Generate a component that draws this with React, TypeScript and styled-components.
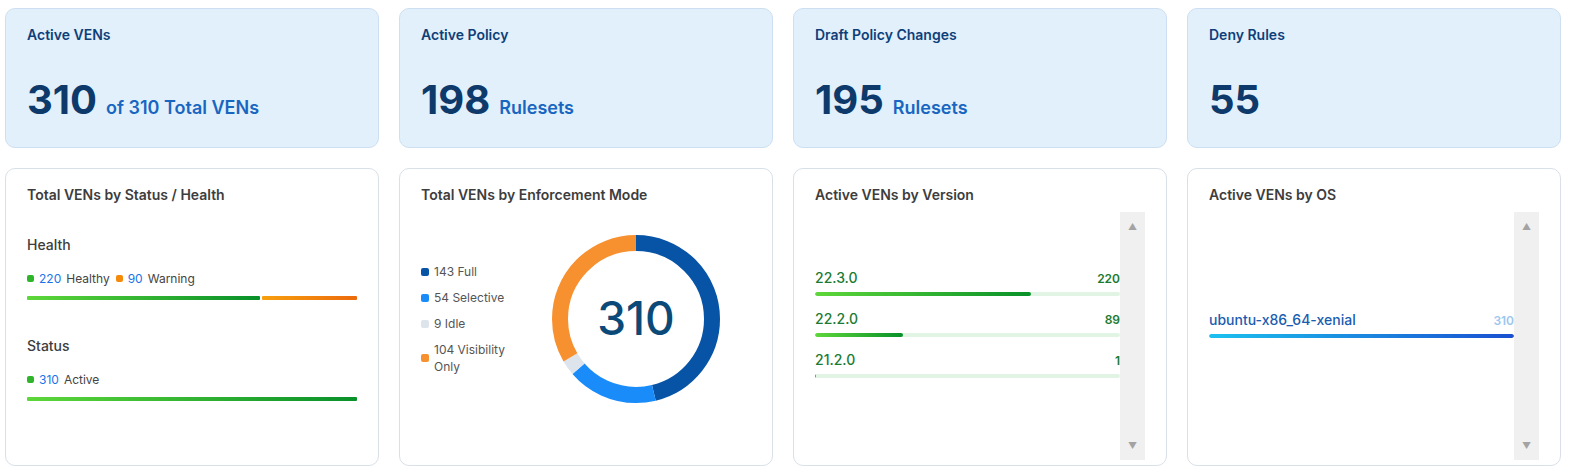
import styled, { createGlobalStyle } from 'styled-components'

const Global = createGlobalStyle`
  body { margin: 0; font-family: Inter, "Noto Sans", sans-serif; background: #fff; }
`

const Page = styled.div`
  display: grid;
  grid-template-columns: repeat(4, 374px);
  grid-template-rows: 140px 298px;
  column-gap: 20px;
  row-gap: 20px;
  padding: 8px 0 0 5px;
`

const StatCard = styled.div`
  background: #e2f0fc;
  border: 1px solid #cddff0;
  border-radius: 10px;
  padding: 17px 21px 0;
  box-sizing: border-box;
  display: flex;
  flex-direction: column;
`

const StatTitle = styled.div`
  font-size: 14px;
  font-weight: 600;
  color: #0e3f78;
`

const StatValue = styled.div`
  margin-top: 32px;
  display: flex;
  align-items: baseline;
  gap: 9px;
`

const Big = styled.span`
  font-size: 40px;
  font-weight: 700;
  color: #0d3a6b;
`

const Unit = styled.span`
  font-size: 18px;
  font-weight: 600;
  color: #1966c1;
`

const Card = styled.div`
  background: #fff;
  border: 1px solid #d9e0e8;
  border-radius: 10px;
  padding: 17px 21px 0;
  box-sizing: border-box;
  position: relative;
`

const CardTitle = styled.div`
  font-size: 14px;
  font-weight: 600;
  color: #3d3d3d;
`

const Section = styled.div`
  font-size: 14px;
  font-weight: 500;
  color: #3d3d3d;
  margin-top: ${p => p.$top}px;
`

const Legend = styled.div`
  display: flex;
  gap: 6px;
  margin-top: 18px;
  font-size: 12px;
  color: #444;
`

const LegendItem = styled.span`
  display: inline-flex;
  align-items: center;
  gap: 5px;
  b { font-weight: 400; color: #1a73e8; }
`

const Dot = styled.i<{ $c: string }>`
  display: inline-block;
  width: 7px;
  height: 7px;
  border-radius: 2px;
  background: ${p => p.$c};
`

const StackBar = styled.div`
  display: flex;
  gap: 2px;
  margin-top: 10px;
  height: 4px;
`

const Seg = styled.div<{ $bg: string; $flex: number }>`
  flex: ${p => p.$flex};
  background: ${p => p.$bg};
  border-radius: 1px;
`

const DonutBody = styled.div`
  display: flex;
  align-items: center;
  margin-top: 31px;
`

const DonutLegend = styled.div`
  width: 130px;
  display: flex;
  flex-direction: column;
  gap: 9px;
  font-size: 12px;
  color: #555;
`

const DLItem = styled.div`
  display: flex;
  align-items: center;
  gap: 5px;
  line-height: 17px;
`

const RoundDot = styled.i<{ $c: string }>`
  flex: none;
  width: 8px;
  height: 8px;
  border-radius: 2px;
  background: ${p => p.$c};
`

const ListBody = styled.div`
  display: flex;
  margin-top: 9px;
  height: 248px;
`

const ListArea = styled.div`
  flex: 1;
  display: flex;
  flex-direction: column;
  padding-top: ${p => p.$top}px;
`

const Scroll = styled.div`
  width: 25px;
  background: #f0f0f0;
  display: flex;
  flex-direction: column;
  justify-content: space-between;
  align-items: center;
  padding: 9px 0;
  box-sizing: border-box;
  color: #a3a3a3;
  font-size: 9px;
`

const Row = styled.div`
  margin-bottom: 14px;
`

const RowHead = styled.div<{ $c: string }>`
  display: flex;
  justify-content: space-between;
  align-items: flex-end;
  color: ${p => p.$c};
  font-size: 14px;
  font-weight: 500;
  span:last-child { font-size: 12px; font-weight: 600; }
`

const Track = styled.div<{ $bg: string }>`
  margin-top: 6px;
  height: 4px;
  background: ${p => p.$bg};
  border-radius: 2px;
  overflow: hidden;
`

const Fill = styled.div<{ $bg: string }>`
  height: 100%;
  background: ${p => p.$bg};
  border-radius: 2px;
`

const green = 'linear-gradient(90deg, #5ed73a, #08902a)'

const versions = [
  { v: '22.3.0', n: 220 },
  { v: '22.2.0', n: 89 },
  { v: '21.2.0', n: 1 },
]

const Donut = () => {
  const data = [
    { n: 143, c: '#0753a6' },
    { n: 54, c: '#1a8cfa' },
    { n: 9, c: '#dde4ec' },
    { n: 104, c: '#f7902f' },
  ]
  const r = 76
  const C = 2 * Math.PI * r
  let acc = 0
  return (
    <svg width="170" height="170" viewBox="0 0 170 170">
      <g transform="rotate(-90 85 85)">
        {data.map((d, i) => {
          const len = (d.n / 310) * C
          const el = (
            <circle key={i} cx="85" cy="85" r={r} fill="none" stroke={d.c} strokeWidth="16"
              strokeDasharray={`${len} ${C - len}`} strokeDashoffset={-acc} />
          )
          acc += len
          return el
        })}
      </g>
      <text x="85" y="101" textAnchor="middle" fontSize="46" fontWeight="500" fill="#0b4a78"
        fontFamily="Inter, sans-serif">310</text>
    </svg>
  )
}

export default function App() {
  return (
    <>
      <Global />
      <Page>
        <StatCard>
          <StatTitle>Active VENs</StatTitle>
          <StatValue><Big>310</Big><Unit>of 310 Total VENs</Unit></StatValue>
        </StatCard>
        <StatCard>
          <StatTitle>Active Policy</StatTitle>
          <StatValue><Big>198</Big><Unit>Rulesets</Unit></StatValue>
        </StatCard>
        <StatCard>
          <StatTitle>Draft Policy Changes</StatTitle>
          <StatValue><Big>195</Big><Unit>Rulesets</Unit></StatValue>
        </StatCard>
        <StatCard>
          <StatTitle>Deny Rules</StatTitle>
          <StatValue><Big>55</Big></StatValue>
        </StatCard>

        <Card>
          <CardTitle>Total VENs by Status / Health</CardTitle>
          <Section $top={33}>Health</Section>
          <Legend>
            <LegendItem><Dot $c="#2fb52a" /><b>220</b> Healthy</LegendItem>
            <LegendItem><Dot $c="#f58a0a" /><b>90</b> Warning</LegendItem>
          </Legend>
          <StackBar>
            <Seg $flex={220} $bg={green} />
            <Seg $flex={90} $bg="linear-gradient(90deg, #f7a00f, #ec6a0c)" />
          </StackBar>
          <Section $top={37}>Status</Section>
          <Legend>
            <LegendItem><Dot $c="#2fb52a" /><b>310</b> Active</LegendItem>
          </Legend>
          <StackBar>
            <Seg $flex={1} $bg={green} />
          </StackBar>
        </Card>

        <Card>
          <CardTitle>Total VENs by Enforcement Mode</CardTitle>
          <DonutBody>
            <DonutLegend>
              <DLItem><RoundDot $c="#0753a6" />143 Full</DLItem>
              <DLItem><RoundDot $c="#1a8cfa" />54 Selective</DLItem>
              <DLItem><RoundDot $c="#dde4ec" />9 Idle</DLItem>
              <DLItem><RoundDot $c="#f7902f" />104 Visibility<br />Only</DLItem>
            </DonutLegend>
            <Donut />
          </DonutBody>
        </Card>

        <Card>
          <CardTitle>Active VENs by Version</CardTitle>
          <ListBody>
            <ListArea $top={57}>
              {versions.map(r => (
                <Row key={r.v}>
                  <RowHead $c="#1b7b32"><span>{r.v}</span><span>{r.n}</span></RowHead>
                  <Track $bg="#e2f5e5">
                    <Fill $bg={green} style={{ width: `${Math.max((r.n / 310) * 100, 0.4)}%` }} />
                  </Track>
                </Row>
              ))}
            </ListArea>
            <Scroll><span>▲</span><span>▼</span></Scroll>
          </ListBody>
        </Card>

        <Card>
          <CardTitle>Active VENs by OS</CardTitle>
          <ListBody>
            <ListArea $top={99}>
              <Row>
                <RowHead $c="#1a5cb0"><span>ubuntu-x86_64-xenial</span><span style={{ color: '#9cc7ef' }}>310</span></RowHead>
                <Track $bg="#e3eefa">
                  <Fill $bg="linear-gradient(90deg, #1bc1ef, #1a4fd0)" style={{ width: '100%' }} />
                </Track>
              </Row>
            </ListArea>
            <Scroll><span>▲</span><span>▼</span></Scroll>
          </ListBody>
        </Card>
      </Page>
    </>
  )
}
